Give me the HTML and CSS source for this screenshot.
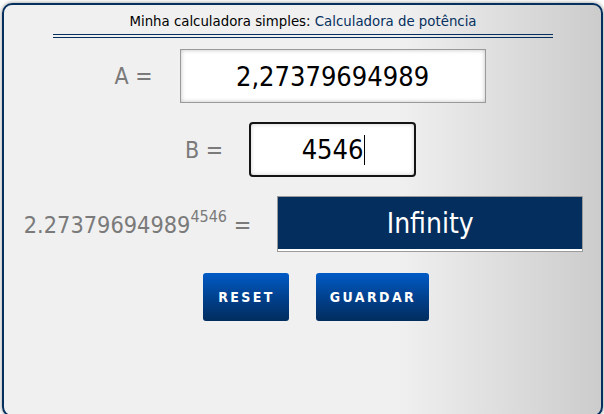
FILE: index.html
```html
<!DOCTYPE html>
<html lang="pt">
<head>
<meta charset="utf-8">
<title>Calculadora de potência</title>
<link rel="stylesheet" href="styles.css">
</head>
<body>
<div class="card">
  <div class="title"><span class="t-black">Minha calculadora simples:</span> <span class="t-navy">Calculadora de potência</span></div>
  <div class="row row-a">
    <span class="label">A =</span>
    <div class="field field-a">2,27379694989</div>
  </div>
  <div class="row row-b">
    <span class="label">B =</span>
    <div class="field field-b"><span class="val-b">4546</span><span class="caret"></span></div>
  </div>
  <div class="row row-r">
    <span class="label label-r">2.27379694989<sup class="exp">4546</sup> =</span>
    <div class="result">Infinity</div>
  </div>
  <div class="buttons">
    <button class="btn btn-reset">RESET</button>
    <button class="btn btn-save">GUARDAR</button>
  </div>
</div>
</body>
</html>
```
FILE: styles.css
```css
html, body {
  margin: 0;
  padding: 0;
  background: #ffffff;
  overflow: hidden;
}
body {
  font-family: "DejaVu Sans Condensed", "DejaVu Sans", sans-serif;
  font-stretch: condensed;
}
.card {
  box-sizing: border-box;
  margin: 3px 1px 0 2px;
  height: 414px;
  border: 2px solid #05305e;
  border-radius: 10px;
  background: linear-gradient(to right, #f0f0f0 0%, #f0f0f0 66%, #cccccc 100%);
  box-shadow: 0 0 4px rgba(0,0,0,0.45);
  display: flex;
  flex-direction: column;
  align-items: center;
}
.title {
  width: 500px;
  margin-top: 4px;
  height: 24px;
  line-height: 24px;
  font-size: 14.8px;
  text-align: center;
  border-bottom: 4px double #05305e;
  box-sizing: content-box;
  padding-bottom: 1px;
  margin-left: 1px;
}
.t-black { color: #000; }
.t-navy { color: #05305e; }
.row {
  display: flex;
  align-items: center;
  justify-content: center;
  gap: 28px;
  width: 100%;
  box-sizing: border-box;
}
.row-a { margin-top: 11px; gap: 27px; padding-right: 5px; }
.row-b { margin-top: 19px; gap: 26px; padding-right: 4px; }
.row-r { margin-top: 19px; gap: 26px; }
.label {
  font-size: 23px;
  color: #7a7a7a;
}
.label-r {
  font-size: 23.3px;
  margin-left: 2px;
}
.exp {
  font-size: 16px;
  vertical-align: 11px;
  line-height: 0;
}
.field {
  box-sizing: border-box;
  background: #ffffff;
  display: flex;
  align-items: center;
  justify-content: center;
  font-size: 27px;
  color: #000;
}
.field-a {
  width: 306px;
  height: 54px;
  border: 1px solid #9a9a9a;
  box-shadow: inset 0 0 4px rgba(0,0,0,0.25);
}
.field-b {
  width: 167px;
  height: 55px;
  border: 2px solid #141414;
  border-radius: 4px;
  box-shadow: inset 0 0 4px rgba(0,0,0,0.2);
}
.caret {
  display: inline-block;
  width: 1px;
  height: 30px;
  background: #000;
  margin-left: 1px;
  margin-right: -2px;
}
.result {
  box-sizing: border-box;
  width: 306px;
  height: 56px;
  border: 1px solid #9a9a9a;
  background: #032e5e;
  box-shadow: inset 0 -2px 0 #ffffff;
  color: #ffffff;
  font-size: 28px;
  display: flex;
  align-items: center;
  justify-content: center;
  padding-bottom: 2px;
}
.buttons {
  display: flex;
  gap: 27px;
  margin-top: 21px;
  margin-left: 26px;
}
.btn {
  height: 48px;
  border: none;
  border-radius: 3px;
  background: linear-gradient(to bottom, #005bc6 0%, #013f8a 55%, #022d5e 100%);
  color: #ffffff;
  font-family: "DejaVu Sans Condensed", "DejaVu Sans", sans-serif;
  font-stretch: condensed;
  font-weight: bold;
  font-size: 14px;
  letter-spacing: 2.4px;
  padding: 0 0 0 2px;
  cursor: pointer;
}
.btn-reset { width: 86px; }
.btn-save { width: 113px; }
```
